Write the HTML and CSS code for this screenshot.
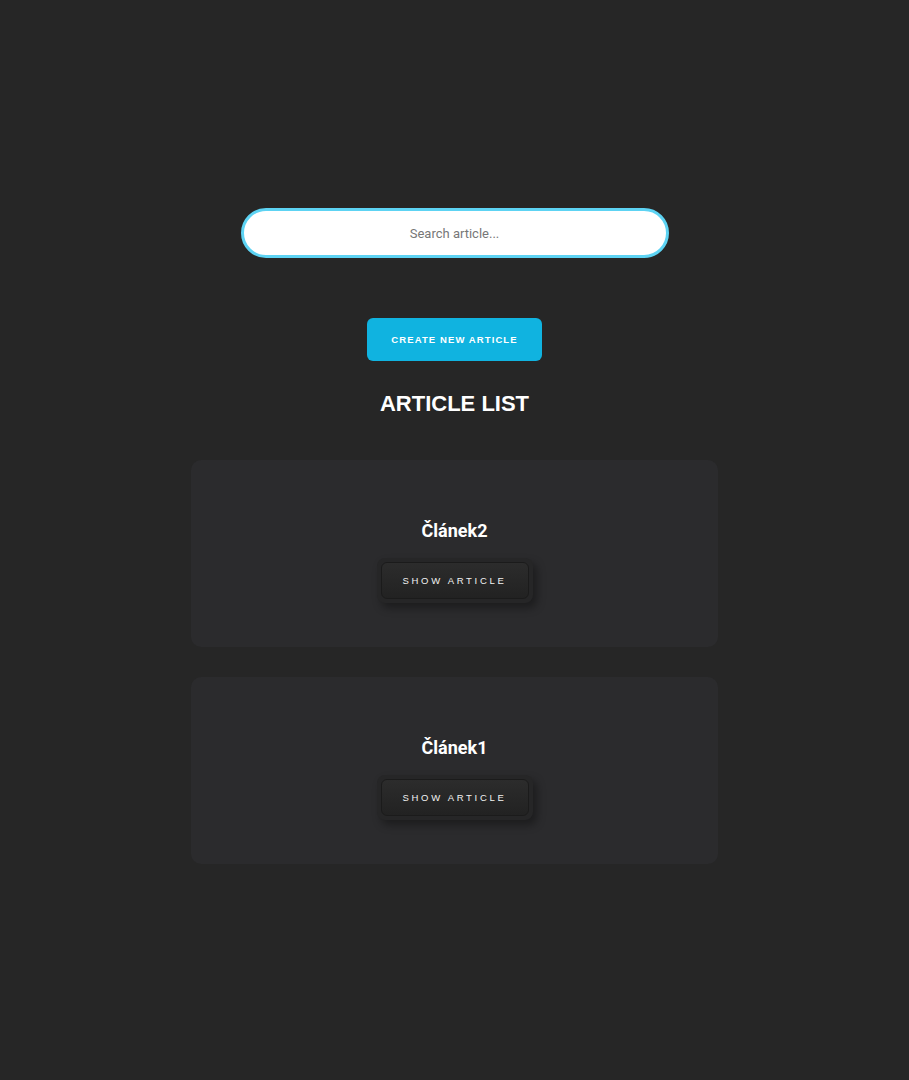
FILE: index.html
```html
<!DOCTYPE html>
<html lang="cs">
<head>
<meta charset="utf-8">
<title>Articles</title>
<link rel="stylesheet" href="styles.css">
</head>
<body>
<main class="page">
  <div class="search-wrap">
    <input class="search" type="text" placeholder="Search article...">
  </div>
  <button class="create-btn">CREATE NEW ARTICLE</button>
  <h1 class="list-title">ARTICLE LIST</h1>
  <section class="list">
    <article class="card">
      <h2 class="card-title">Článek2</h2>
      <div class="btn-ring"><button class="show-btn">SHOW ARTICLE</button></div>
    </article>
    <article class="card">
      <h2 class="card-title">Článek1</h2>
      <div class="btn-ring"><button class="show-btn">SHOW ARTICLE</button></div>
    </article>
  </section>
</main>
</body>
</html>
```
FILE: styles.css
```css
html, body {
  margin: 0;
  padding: 0;
  background: #262626;
  min-height: 100%;
}
body {
  font-family: "Liberation Sans", Arial, sans-serif;
  color: #fff;
}
.page {
  display: flex;
  flex-direction: column;
  align-items: center;
  padding-top: 208px;
}
.search-wrap {
  width: 428px;
}
.search {
  box-sizing: border-box;
  width: 100%;
  height: 50px;
  border: 3px solid #5dd3f3;
  border-radius: 25px;
  background: #fff;
  text-align: center;
  font-family: Roboto, "Liberation Sans", sans-serif;
  font-size: 13px;
  color: #333;
  outline: none;
}
.search::placeholder {
  color: #777;
}
.create-btn {
  margin-top: 60px;
  width: 175px;
  height: 43px;
  border: none;
  border-radius: 6px;
  background: #10b3e0;
  color: #fff;
  font-family: "Liberation Sans", Arial, sans-serif;
  font-weight: bold;
  font-size: 9.5px;
  letter-spacing: 1.1px;
  cursor: pointer;
}
.list-title {
  margin: 30px 0 0;
  font-size: 22px;
  font-weight: bold;
  line-height: 25px;
  color: #fff;
}
.list {
  margin-top: 44px;
  display: flex;
  flex-direction: column;
  gap: 30px;
}
.card {
  box-sizing: border-box;
  width: 527px;
  height: 187px;
  background: #2b2b2d;
  border-radius: 10px;
  display: flex;
  flex-direction: column;
  align-items: center;
  padding-top: 60px;
}
.card-title {
  margin: 0;
  font-family: Roboto, "Liberation Sans", sans-serif;
  font-weight: bold;
  font-size: 18px;
  line-height: 21px;
  color: #fff;
}
.btn-ring {
  margin-top: 17px;
  padding: 4px;
  background: #262627;
  border-radius: 8px;
  box-shadow: 4px 5px 8px rgba(0,0,0,0.35);
}
.show-btn {
  display: block;
  box-sizing: border-box;
  width: 148px;
  height: 37px;
  border: 1px solid #1b1b1b;
  border-radius: 6px;
  background: linear-gradient(180deg, #2c2c2c 0%, #222 100%);
  color: #f2f2f2;
  font-family: "Liberation Sans", Arial, sans-serif;
  font-size: 9.5px;
  letter-spacing: 2.7px;
  padding-left: 6px;
  cursor: pointer;
}
```
